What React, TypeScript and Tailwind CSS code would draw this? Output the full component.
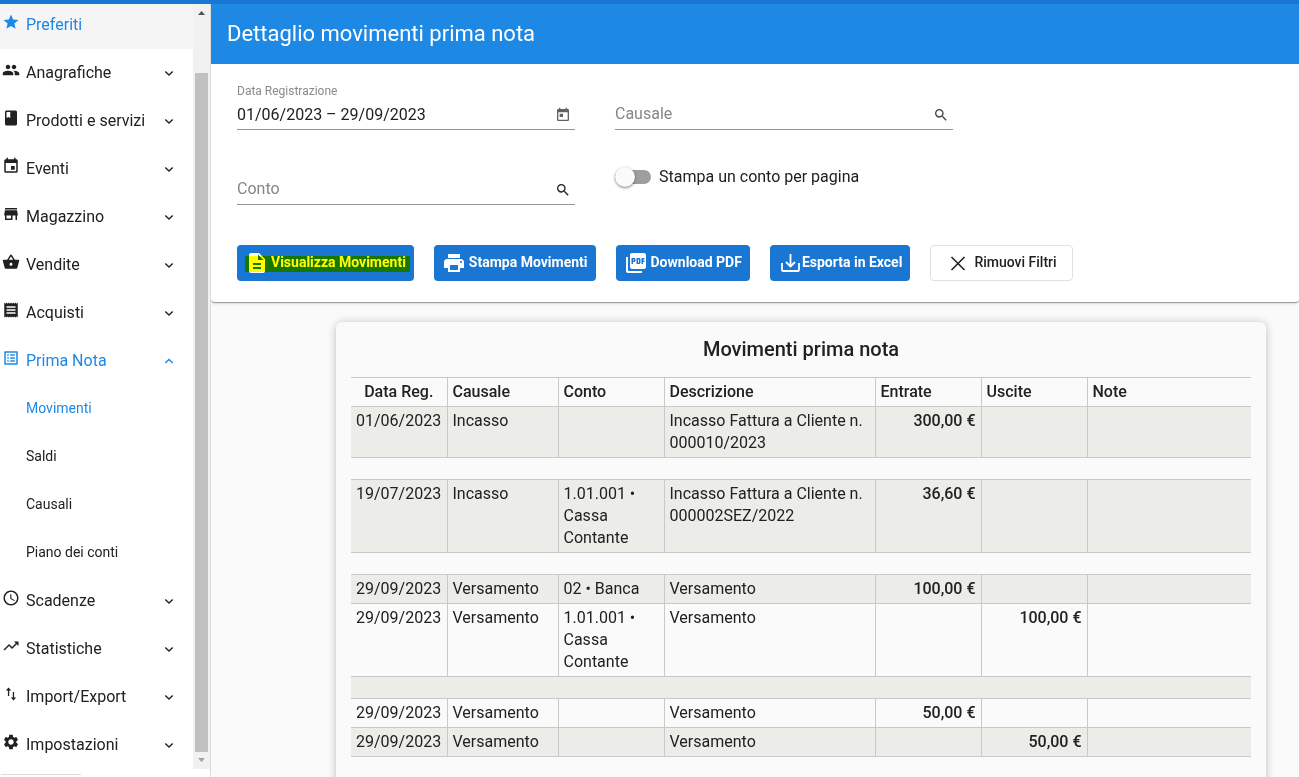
import { useState } from "react";
import type { ReactNode } from "react";
import {
  MdStar,
  MdPeople,
  MdBook,
  MdEvent,
  MdStore,
  MdShoppingBasket,
  MdReceipt,
  MdListAlt,
  MdAccessTime,
  MdTrendingUp,
  MdSettings,
  MdSearch,
  MdToday,
  MdDescription,
  MdPrint,
} from "react-icons/md";

type IconComponent = (props: { className?: string }) => ReactNode;
type MenuItem = { label: string; icon: IconComponent; children?: string[]; leaf?: boolean };

const menu: MenuItem[] = [
  { label: "Preferiti", icon: MdStar, leaf: true },
  { label: "Anagrafiche", icon: MdPeople },
  { label: "Prodotti e servizi", icon: MdBook },
  { label: "Eventi", icon: MdEvent },
  { label: "Magazzino", icon: MdStore },
  { label: "Vendite", icon: MdShoppingBasket },
  { label: "Acquisti", icon: MdReceipt },
  { label: "Prima Nota", icon: MdListAlt, children: ["Movimenti", "Saldi", "Causali", "Piano dei conti"] },
  { label: "Scadenze", icon: MdAccessTime },
  { label: "Statistiche", icon: MdTrendingUp },
  { label: "Import/Export", icon: ImportExportIcon },
  { label: "Impostazioni", icon: MdSettings },
];

type Row = { data: string; causale: string; conto: string; descrizione: string; entrate?: string; uscite?: string };

// null = empty row between two groups
const rows: (Row | null)[] = [
  { data: "01/06/2023", causale: "Incasso", conto: "", descrizione: "Incasso Fattura a Cliente n. 000010/2023", entrate: "300,00 €" },
  null,
  { data: "19/07/2023", causale: "Incasso", conto: "1.01.001 • Cassa Contante", descrizione: "Incasso Fattura a Cliente n. 000002SEZ/2022", entrate: "36,60 €" },
  null,
  { data: "29/09/2023", causale: "Versamento", conto: "02 • Banca", descrizione: "Versamento", entrate: "100,00 €" },
  { data: "29/09/2023", causale: "Versamento", conto: "1.01.001 • Cassa Contante", descrizione: "Versamento", uscite: "100,00 €" },
  null,
  { data: "29/09/2023", causale: "Versamento", conto: "", descrizione: "Versamento", entrate: "50,00 €" },
  { data: "29/09/2023", causale: "Versamento", conto: "", descrizione: "Versamento", uscite: "50,00 €" },
];

function ImportExportIcon({ className }: { className?: string }) {
  return (
    <svg className={className} viewBox="0 0 18 18" fill="currentColor">
      <path d="M6.500 2.500L3.800 5.500H5.900V11h1.300V5.500h2.100zM11.500 15.500l2.700-3h-2.100V7h-1.300v5.500H8.800z" />
    </svg>
  );
}

function Chevron({ up }: { up?: boolean }) {
  return (
    <svg className="size-4" viewBox="0 0 16 16" fill="none" stroke="currentColor" strokeWidth="1.400">
      <path d={up ? "M4.300 10L8 6.500 11.700 10" : "M4.300 6.500L8 10l3.700-3.500"} />
    </svg>
  );
}

function CloseIcon() {
  return (
    <svg className="size-6" viewBox="0 0 24 24" fill="none" stroke="currentColor" strokeWidth="1.600">
      <path d="M5.500 6l13 13M18.500 6l-13 13" />
    </svg>
  );
}

function PdfIcon() {
  return (
    <svg className="size-6" viewBox="0 0 24 24" fill="currentColor">
      <path d="M20 2H8c-1.100 0-2 .9-2 2v12c0 1.100.9 2 2 2h12c1.100 0 2-.9 2-2V4c0-1.100-.9-2-2-2zm-8.500 7.500c0 .83-.67 1.500-1.500 1.500H9v2H7.500V7H10c.83 0 1.500.67 1.500 1.500v1zm5 2c0 .83-.67 1.500-1.500 1.500h-2.500V7H15c.83 0 1.500.67 1.500 1.500v3zm4-3H19v1h1.500V11H19v2h-1.500V7h3v1.500zM9 9.500h1v-1H9v1zM4 6H2v14c0 1.100.9 2 2 2h14v-2H4V6zm10 5.500h1v-3h-1v3z" />
    </svg>
  );
}

function ExportIcon() {
  return (
    <svg className="size-6" viewBox="0 0 24 24" fill="none" stroke="currentColor" strokeWidth="1.800">
      <path d="M4 12v7q0 1 1 1h15q1 0 1-1v-7" />
      <path d="M12.500 3v12.500" />
      <path d="M8 11l4.500 4.500L17 11" />
    </svg>
  );
}

function Sidebar() {
  const [open, setOpen] = useState("Prima Nota");

  return (
    <aside className="flex w-[211px] shrink-0 flex-col border-r border-[#dcdcdc] bg-white">
      <div className="flex min-h-0 flex-1">
        <nav className="min-w-0 flex-1 overflow-hidden">
          {/* list is scrolled a little under the top bar */}
          <ul className="-mt-[3px]">
            {menu.map(({ label, icon: Icon, children, leaf }) => {
              const expanded = open === label && !!children;
              return (
                <li key={label}>
                  <button
                    onClick={() => setOpen(expanded ? "" : label)}
                    className={`flex h-12 w-full items-center pr-4 pl-[2px] text-left text-base ${leaf ? "bg-[#f5f5f5]" : ""} ${leaf || expanded ? "text-[#1e88e5]" : "text-[#212121]"}`}
                  >
                    <Icon className="mr-[6px] mb-[6px] size-[18px] shrink-0" />
                    <span className="flex-1 pb-px whitespace-nowrap">{label}</span>
                    {!leaf && <Chevron up={expanded} />}
                  </button>
                  {expanded && (
                    <ul>
                      {children.map((c) => (
                        <li key={c}>
                          <a
                            href="#"
                            className={`flex h-12 items-center pb-[3px] pl-[26px] text-sm ${c === "Movimenti" ? "text-[#1e88e5]" : "text-[#212121]"}`}
                          >
                            {c}
                          </a>
                        </li>
                      ))}
                    </ul>
                  )}
                </li>
              );
            })}
          </ul>
        </nav>
        {/* Scrollbar */}
        <div className="flex w-[17px] flex-col items-center bg-[#f1f1f1]" aria-hidden="true">
          <svg className="size-[17px]" viewBox="0 0 17 17">
            <path d="M5 11h7L8.500 7z" fill="#505050" />
          </svg>
          <div className="flex-[52]" />
          <div className="w-[13px] flex-[679] bg-[#c1c1c1]" />
          <svg className="size-[17px]" viewBox="0 0 17 17">
            <path d="M5 6h7L8.500 10z" fill="#a3a3a3" />
          </svg>
        </div>
      </div>
      <div className="h-2 pt-[5px] pl-px">
        <div className="h-px w-20 bg-[#dadada]" />
      </div>
    </aside>
  );
}

function Field({ id, label, value, children }: { id: string; label: string; value?: string; children: ReactNode }) {
  return (
    <div className="flex h-[50px] max-w-[338px] flex-1 flex-col justify-end border-b border-[#949494]">
      {value && (
        <label htmlFor={id} className="text-xs leading-4 text-[#8a8a8a]">
          {label}
        </label>
      )}
      <div className="flex h-[30px] items-center pr-1">
        <input
          id={id}
          defaultValue={value}
          placeholder={value ? undefined : label}
          aria-label={value ? undefined : label}
          className={`min-w-0 flex-1 text-base text-[#212121] outline-none placeholder:text-[#868686] ${value ? "pt-0.5" : ""}`}
        />
        <span className="pt-0.5">{children}</span>
      </div>
    </div>
  );
}

const blueButton =
  "relative flex h-9 items-center rounded bg-[#1976d2] px-2 text-sm font-bold text-white";

function Filters() {
  const [perPage, setPerPage] = useState(false);

  return (
    <section className="rounded-b border-b border-[#9e9e9e] bg-white px-[26px] pt-4 pb-[21px] shadow-sm">
      <div className="flex gap-10">
        <Field id="data" label="Data Registrazione" value="01/06/2023 – 29/09/2023">
          <MdToday className="size-4 text-[#616161]" />
        </Field>
        <Field id="causale" label="Causale">
          <MdSearch className="size-4 text-[#424242]" />
        </Field>
      </div>
      <div className="mt-[25px] flex gap-10">
        <Field id="conto" label="Conto">
          <MdSearch className="size-4 text-[#212121]" />
        </Field>
        <label className="flex h-11 flex-1 cursor-pointer items-center gap-2 text-base text-[#212121]">
          <input
            type="checkbox"
            role="switch"
            checked={perPage}
            onChange={(e) => setPerPage(e.target.checked)}
            className="h-[14px] w-9 appearance-none rounded-full bg-[#9e9e9e] before:-mt-[3px] before:block before:size-5 before:rounded-full before:bg-[#fafafa] before:shadow before:shadow-black/40 checked:bg-[#90caf9] checked:before:ml-4"
          />
          Stampa un conto per pagina
        </label>
      </div>
      <div className="mt-10 flex flex-wrap gap-5">
        <button className={blueButton}>
          <MdDescription className="mr-[2px] size-6" />
          <span className="pb-0.5">Visualizza Movimenti</span>
          <span className="absolute top-[11px] right-1 left-2 h-4 bg-[#ffff00] mix-blend-multiply" />
        </button>
        <button className={blueButton}>
          <MdPrint className="mr-[3px] size-6" />
          <span className="pb-0.5">Stampa Movimenti</span>
        </button>
        <button className={blueButton}>
          <span className="mr-[3px]">
            <PdfIcon />
          </span>
          <span className="pb-0.5">Download PDF</span>
        </button>
        <button className={blueButton}>
          <ExportIcon />
          <span className="pb-0.5">Esporta in Excel</span>
        </button>
        <button className="flex h-9 items-center gap-1 rounded border border-[#e0e0e0] bg-white px-[15px] text-sm font-medium text-[#212121]">
          <CloseIcon />
          <span className="pb-0.5">Rimuovi Filtri</span>
        </button>
      </div>
    </section>
  );
}

const cell = "border-r border-[#c9c9c9] px-[5px] py-[3px] align-top last:border-r-0";

function MovimentiTable() {
  return (
    <section className="mt-[19px] mr-[33px] mb-6 ml-[125px] rounded-md bg-[#fafafa] px-[15px] pt-[11px] pb-10 text-[#212121] shadow-[0_1px_8px_rgba(0,0,0,0.25)]">
      <h2 className="text-center text-xl leading-8 font-medium">Movimenti prima nota</h2>
      <table className="mt-3 w-full table-fixed border-collapse text-base leading-[22px]">
        <colgroup>
          <col className="w-24" />
          <col className="w-[111px]" />
          <col className="w-[106px]" />
          <col className="w-[211px]" />
          <col className="w-[106px]" />
          <col className="w-[106px]" />
          <col />
        </colgroup>
        <thead>
          <tr className="border-y border-[#c9c9c9] text-left">
            <th className={`${cell} text-center font-medium`}>Data Reg.</th>
            <th className={`${cell} font-medium`}>Causale</th>
            <th className={`${cell} font-medium`}>Conto</th>
            <th className={`${cell} font-medium`}>Descrizione</th>
            <th className={`${cell} font-medium`}>Entrate</th>
            <th className={`${cell} font-medium`}>Uscite</th>
            <th className={`${cell} font-medium`}>Note</th>
          </tr>
        </thead>
        <tbody>
          {rows.map((r, i) =>
            r ? (
              <tr key={i} className="border-y border-[#c9c9c9] odd:bg-[#ecede8]">
                <td className={cell}>{r.data}</td>
                <td className={cell}>{r.causale}</td>
                <td className={cell}>{r.conto}</td>
                <td className={cell}>{r.descrizione}</td>
                <td className={`${cell} text-right font-medium`}>{r.entrate}</td>
                <td className={`${cell} text-right font-medium`}>{r.uscite}</td>
                <td className={cell}></td>
              </tr>
            ) : (
              <tr key={i} className="h-[22px] border-y border-[#c9c9c9] odd:bg-[#ecede8]">
                <td colSpan={7}></td>
              </tr>
            )
          )}
        </tbody>
      </table>
    </section>
  );
}

export default function App() {
  return (
    <div className="flex h-screen flex-col overflow-hidden bg-[#fafafa] font-[Roboto,sans-serif]">
      <div className="z-10 h-1 shrink-0 bg-[#1976d2]" />
      <div className="flex min-h-0 flex-1">
        <Sidebar />
        <main className="min-w-0 flex-1 overflow-y-auto [scrollbar-width:none]">
          <header className="flex h-[60px] items-center bg-[#1e88e5] px-4 pb-0.5">
            <h1 className="text-[22px] text-white">Dettaglio movimenti prima nota</h1>
          </header>
          <Filters />
          <MovimentiTable />
        </main>
      </div>
    </div>
  );
}
